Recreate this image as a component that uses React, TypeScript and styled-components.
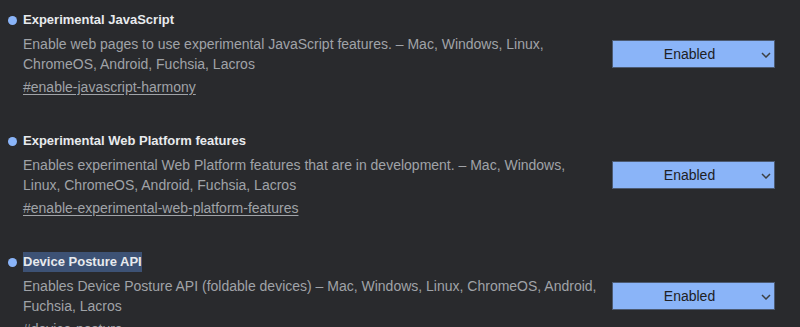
import React from 'react';
import styled, { createGlobalStyle } from 'styled-components';

const GlobalStyle = createGlobalStyle`
  html, body {
    margin: 0;
    padding: 0;
    background: #292a2d;
  }
  body {
    font-family: 'Liberation Sans', Arial, sans-serif;
  }
  ::selection {
    background: #3d5275;
  }
`;

const Page = styled.div`
  display: flex;
  flex-direction: column;
  gap: 34px;
  width: 800px;
  height: 327px;
  overflow: hidden;
  box-sizing: border-box;
  padding: 10px 25px 0 8px;
  background: #292a2d;
`;

const Experiment = styled.div`
  display: flex;
  align-items: center;
  justify-content: space-between;
  flex-shrink: 0;
`;

const Info = styled.div`
  display: flex;
  flex-direction: column;
  min-width: 0;
`;

const NameRow = styled.div`
  display: flex;
  align-items: center;
  gap: 6px;
  height: 20px;
`;

const Dot = styled.span`
  width: 9px;
  height: 9px;
  border-radius: 50%;
  background: #8ab4f8;
  flex-shrink: 0;
`;

const Name = styled.span<{ $selected?: boolean }>`
  font-size: 13px;
  font-weight: 700;
  line-height: 20px;
  color: #e8eaed;
  background: ${(p) => (p.$selected ? '#3d5275' : 'transparent')};
`;

const Description = styled.p`
  margin: 5px 0 0 15px;
  font-size: 14px;
  line-height: 19.5px;
  white-space: nowrap;
  color: #a0a3a8;
`;

const Permalink = styled.a`
  display: block;
  margin: 3px 0 0 15px;
  font-size: 14px;
  line-height: 20px;
  color: #a0a3a8;
  text-decoration: underline;
  text-underline-offset: 2px;
`;

const Select = styled.div`
  position: relative;
  display: flex;
  align-items: center;
  justify-content: center;
  width: 163px;
  height: 28px;
  box-sizing: border-box;
  padding-right: 8px;
  background: #8ab4f8;
  border: 1px solid #4c5a72;
  font-size: 14px;
  color: #202124;
  flex-shrink: 0;
`;

const Chevron = styled.svg`
  position: absolute;
  right: 3px;
  top: 11px;
`;

type Flag = {
  name: string;
  lines: string[];
  link: string;
  selected?: boolean;
};

const flags: Flag[] = [
  {
    name: 'Experimental JavaScript',
    lines: [
      'Enable web pages to use experimental JavaScript features. – Mac, Windows, Linux,',
      'ChromeOS, Android, Fuchsia, Lacros',
    ],
    link: '#enable-javascript-harmony',
  },
  {
    name: 'Experimental Web Platform features',
    lines: [
      'Enables experimental Web Platform features that are in development. – Mac, Windows,',
      'Linux, ChromeOS, Android, Fuchsia, Lacros',
    ],
    link: '#enable-experimental-web-platform-features',
  },
  {
    name: 'Device Posture API',
    lines: [
      'Enables Device Posture API (foldable devices) – Mac, Windows, Linux, ChromeOS, Android,',
      'Fuchsia, Lacros',
    ],
    link: '#device-posture',
    selected: true,
  },
];

const App = () => {
  return (
    <>
      <GlobalStyle />
      <Page>
        {flags.map((f) => (
          <Experiment key={f.link}>
            <Info>
              <NameRow>
                <Dot />
                <Name $selected={f.selected}>{f.name}</Name>
              </NameRow>
              <Description>
                {f.lines[0]}
                <br />
                {f.lines[1]}
              </Description>
              <Permalink href={f.link}>{f.link}</Permalink>
            </Info>
            <Select>
              Enabled
              <Chevron width="10" height="6" viewBox="0 0 10 6">
                <path d="M1 1 L5 5 L9 1" fill="none" stroke="#3c4043" strokeWidth="1.5" />
              </Chevron>
            </Select>
          </Experiment>
        ))}
      </Page>
    </>
  );
};

export default App;
